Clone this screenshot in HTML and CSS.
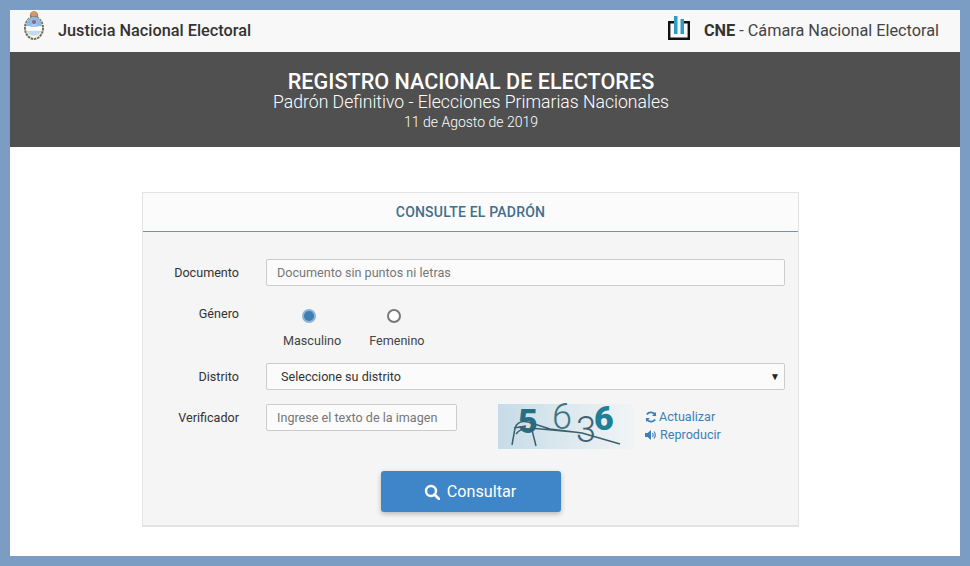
FILE: index.html
```html
<!DOCTYPE html>
<html lang="es">
<head>
<meta charset="utf-8">
<title>Registro Nacional de Electores</title>
<link rel="stylesheet" href="styles.css">
</head>
<body>
<div class="page">
  <header class="topbar">
    <div class="brand">
      <svg class="escudo" width="22" height="31" viewBox="0 0 22 31">
        <path d="M7 7 Q6 2 11 1 Q16 2 15 7Z" fill="#b9794a"/>
        <ellipse cx="11" cy="4" rx="3" ry="2.500" fill="#d09a6a"/>
        <ellipse cx="11" cy="18" rx="9" ry="11" fill="#f6f3ea" stroke="#6f6f58" stroke-width="2" stroke-dasharray="2.500 .8"/>
        <path d="M3 16 A8 9.500 0 0 1 19 16Z" fill="#8dbae2"/>
        <path d="M7 17 L11 10 L15 17Z" fill="#a9c9e8"/>
        <path d="M3 17 H19 L18.500 20 H3.500Z" fill="#fff"/>
        <path d="M3.800 21 H18.200 A8 8 0 0 1 3.800 21Z" fill="#c3d9ee"/>
        <circle cx="11" cy="12" r="2" fill="#8f5f8a"/>
      </svg>
      <span class="brand-name">Justicia Nacional Electoral</span>
    </div>
    <div class="brand">
      <svg class="cne" width="22" height="24" viewBox="0 0 22 24">
        <path d="M7 6.200 H1.200 V22.800 H20.800 V6.200 H15" fill="none" stroke="#111" stroke-width="2.400"/>
        <rect x="6" y="0" width="3.500" height="18" fill="#2f9cc2"/>
        <rect x="12.500" y="3" width="3.500" height="15" fill="#2f9cc2"/>
      </svg>
      <span class="cne-name"><b>CNE</b> - Cámara Nacional Electoral</span>
    </div>
  </header>
  <section class="hero">
    <h1>REGISTRO NACIONAL DE ELECTORES</h1>
    <p class="hero-sub">Padrón Definitivo - Elecciones Primarias Nacionales</p>
    <p class="hero-date">11 de Agosto de 2019</p>
  </section>
  <main class="content">
    <form class="card">
      <h2 class="card-title">CONSULTE EL PADRÓN</h2>
      <div class="card-body">
        <div class="row">
          <label class="lab">Documento</label>
          <div class="fake-input grow">Documento sin puntos ni letras</div>
        </div>
        <div class="row row-genero">
          <label class="lab">Género</label>
          <div class="radios">
            <div class="radio-item"><span class="radio on"></span><span>Masculino</span></div>
            <div class="radio-item"><span class="radio"></span><span>Femenino</span></div>
          </div>
        </div>
        <div class="row row-distrito">
          <label class="lab">Distrito</label>
          <div class="fake-select grow"><span>Seleccione su distrito</span><span class="caret">▼</span></div>
        </div>
        <div class="row row-verif">
          <label class="lab">Verificador</label>
          <div class="fake-input verif">Ingrese el texto de la imagen</div>
          <svg class="captcha" width="135" height="45" viewBox="0 0 135 45">
            <defs>
              <linearGradient id="cg" x1="0" x2="1" y1="0" y2="0">
                <stop offset="0" stop-color="#c6dce8"/>
                <stop offset="1" stop-color="#f1f4f5"/>
              </linearGradient>
            </defs>
            <rect width="135" height="45" fill="url(#cg)"/>
            <text class="cap-bold cap-dark" x="20" y="29">5</text>
            <text class="cap-thin cap-mid" x="54" y="25">6</text>
            <text class="cap-thin cap-slate" x="78" y="38">3</text>
            <text class="cap-bold cap-teal" x="96" y="26">6</text>
            <path d="M14 41 L17 24 Q20 16 30 18 L52 25 L84 29 L122 40 M18 30 Q24 22 34 26 L38 42 M32 24 L76 28 M16 24 L28 22" fill="none" stroke="#3b5f6d" stroke-width="1.500"/>
          </svg>
          <div class="captcha-links">
            <a class="clink"><svg width="12" height="12" viewBox="0 0 12 12"><path d="M10.500 4.500 A5 5 0 0 0 1.800 3.500 M1.500 7.500 A5 5 0 0 0 10.200 8.500" fill="none" stroke="#3f7fb5" stroke-width="1.800"/><path d="M11 1 V5 H7Z M1 11 V7 H5Z" fill="#3f7fb5"/></svg>Actualizar</a>
            <a class="clink"><svg width="13" height="12" viewBox="0 0 13 12"><path d="M0 4 H2.500 L6 1 V11 L2.500 8 H0Z" fill="#3f7fb5"/><path d="M7.500 4 Q9 6 7.500 8 M9 2.500 Q11.500 6 9 9.500" fill="none" stroke="#3f7fb5" stroke-width="1.200"/></svg>Reproducir</a>
          </div>
        </div>
        <div class="actions">
          <button type="button" class="btn">
            <svg width="16" height="16" viewBox="0 0 16 16"><circle cx="7" cy="7" r="5" fill="none" stroke="#fff" stroke-width="2.400"/><path d="M10.500 10.500 L15 15" stroke="#fff" stroke-width="2.800" stroke-linecap="round"/></svg>
            Consultar
          </button>
        </div>
      </div>
    </form>
  </main>
</div>
</body>
</html>
```
FILE: styles.css
```css
* { box-sizing: border-box; }
html, body { margin: 0; height: 100%; }
body {
  background: #7b9dc3;
  padding: 10px;
  font-family: Roboto, "Liberation Sans", sans-serif;
  color: #333;
  overflow: hidden;
}
.page { background: #fff; height: 546px; display: flex; flex-direction: column; }
.topbar {
  height: 42px;
  background: #f8f8f8;
  display: flex;
  justify-content: space-between;
  align-items: center;
  padding: 0 21px 2px 13px;
}
.brand { display: flex; align-items: center; }
.escudo { margin-right: 13px; margin-top: -9px; flex: none; }
.brand-name { font-size: 16.3px; font-weight: 500; color: #333; }
.cne { margin-right: 14px; margin-top: -4px; flex: none; }
.cne-name { font-size: 16.25px; color: #444; }
.cne-name b { font-weight: 700; color: #333; }
.hero {
  height: 95px;
  background: #505050;
  color: #fff;
  text-align: center;
  padding: 17px 28px 0 0;
}
.hero h1 { margin: 0; font-size: 21.6px; font-weight: 500; line-height: 25px; }
.hero-sub { margin: 0; font-size: 17.6px; font-weight: 300; line-height: 17px; }
.hero-date { margin: 3px 0 0; font-size: 14px; font-weight: 300; line-height: 16px; }
.content { flex: 1; padding: 45px 0 0 132px; }
.card {
  width: 657px;
  height: 335px;
  background: #f5f5f5;
  border: 1px solid #e3e3e3;
  border-bottom-width: 2px;
}
.card-title {
  margin: 0;
  height: 39px;
  background: #fbfbfb;
  border-bottom: 1px solid #6d95b8;
  color: #3f6f8f;
  font-size: 14px;
  font-weight: 500;
  letter-spacing: 0.2px;
  line-height: 38px;
  text-align: center;
}
.card-body { padding: 27px 13px 0 0; }
.row { display: flex; align-items: flex-start; }
.lab {
  width: 96px;
  text-align: right;
  font-size: 12.6px;
  line-height: 27px;
  color: #333;
  flex: none;
  margin-right: 27px;
}
.grow { flex: 1; }
.fake-input {
  height: 27px;
  background: #fbfbfb;
  border: 1px solid #ccc;
  border-radius: 2px;
  font-size: 12.6px;
  color: #777;
  line-height: 25px;
  padding-left: 10px;
}
.row-genero { margin-top: 14px; }
.radios { display: flex; gap: 28px; margin-left: 17px; padding-top: 9px; }
.radio-item { display: flex; flex-direction: column; align-items: center; gap: 10px; font-size: 12.6px; color: #444; line-height: 16px; }
.radio { width: 14px; height: 14px; margin-right: 6px; border-radius: 50%; border: 2px solid #777; background: #fff; }
.radio.on { background: #3f7fb5; border-color: #8fb3d4; }
.row-distrito { margin-top: 14px; }
.fake-select {
  height: 27px;
  background: #fbfbfb;
  border: 1px solid #ccc;
  border-radius: 2px;
  font-size: 12.6px;
  color: #333;
  line-height: 25px;
  padding: 0 4px 0 14px;
  display: flex;
  justify-content: space-between;
}
.caret { font-size: 10px; color: #222; }
.row-verif { margin-top: 14px; }
.verif { width: 191px; flex: none; }
.captcha { margin-left: 41px; flex: none; overflow: visible; }
.cap-bold { font: 900 34px Roboto, "Liberation Sans", sans-serif; }
.cap-thin { font: 300 36px Roboto, "Liberation Sans", sans-serif; }
.cap-dark { fill: #256f84; }
.cap-mid { fill: #3d7480; }
.cap-slate { fill: #3f6273; }
.cap-teal { fill: #1f7f97; }
.captcha-links { margin-left: 12px; display: flex; flex-direction: column; gap: 2px; padding-top: 5px; }
.clink { display: flex; align-items: center; gap: 2px; font-size: 12.6px; line-height: 16px; color: #3f7fb5; }
.actions { display: flex; justify-content: center; margin: 22px -13px 0 1px; }
.btn {
  width: 180px;
  height: 41px;
  background: #3f86c8;
  border: 0;
  border-radius: 3px;
  box-shadow: 0 2px 5px rgba(0,0,0,.25);
  color: #fff;
  font: 400 16.2px Roboto, "Liberation Sans", sans-serif;
  display: flex;
  align-items: center;
  justify-content: center;
  gap: 7px;
  padding: 0 2px 0 0;
}
```
